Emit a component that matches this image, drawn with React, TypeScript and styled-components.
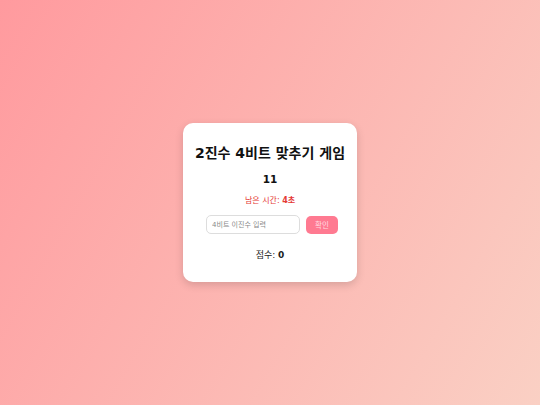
import React from "react";
import styled, { createGlobalStyle } from "styled-components";

const Global = createGlobalStyle`
  html, body { margin: 0; padding: 0; height: 100%; }
  body {
    font-family: "DejaVu Sans", "Noto Sans CJK KR", sans-serif;
    background: linear-gradient(120deg, #ff9a9e 0%, #fad0c4 100%);
    min-height: 405px;
  }
  #root { min-height: 405px; }
`;

const Page = styled.div`
  min-height: 405px;
  display: flex;
  align-items: center;
  justify-content: center;
`;

const Card = styled.div`
  background: #fff;
  border-radius: 10px;
  box-shadow: 0 3px 8px rgba(0, 0, 0, 0.15);
  padding: 21px 12px 21px;
  display: flex;
  flex-direction: column;
  align-items: center;
  text-align: center;
`;

const Title = styled.h1`
  margin: 0;
  font-size: 14px;
  font-weight: 700;
  color: #111;
  line-height: 18px;
`;

const Number = styled.div`
  margin-top: 11px;
  font-size: 10.5px;
  font-weight: 700;
  color: #111;
`;

const Timer = styled.div`
  margin-top: 9px;
  font-size: 8px;
  color: #e53935;
  b { font-weight: 700; }
`;

const Row = styled.div`
  margin-top: 10px;
  margin-left: 4px;
  display: flex;
  align-items: center;
  gap: 6px;
`;

const Input = styled.input`
  width: 94px;
  height: 19px;
  box-sizing: border-box;
  border: 1px solid #ddd;
  border-radius: 5px;
  padding: 0 5px;
  font-family: inherit;
  font-size: 7px;
  outline: none;
  &::placeholder { color: #888; }
`;

const Button = styled.button`
  width: 32px;
  height: 18px;
  border: none;
  border-radius: 5px;
  background: #ff7a91;
  color: #ffd9e0;
  font-family: inherit;
  font-size: 7.5px;
  padding: 0;
`;

const Score = styled.div`
  margin-top: 14px;
  font-size: 9px;
  color: #222;
  b { font-weight: 700; }
`;

export default function App() {
  return (
    <>
      <Global />
      <Page>
        <Card>
          <Title>2진수 4비트 맞추기 게임</Title>
          <Number>11</Number>
          <Timer>
            남은 시간: <b>4초</b>
          </Timer>
          <Row>
            <Input placeholder="4비트 이진수 입력" />
            <Button>확인</Button>
          </Row>
          <Score>
            점수: <b>0</b>
          </Score>
        </Card>
      </Page>
    </>
  );
}
